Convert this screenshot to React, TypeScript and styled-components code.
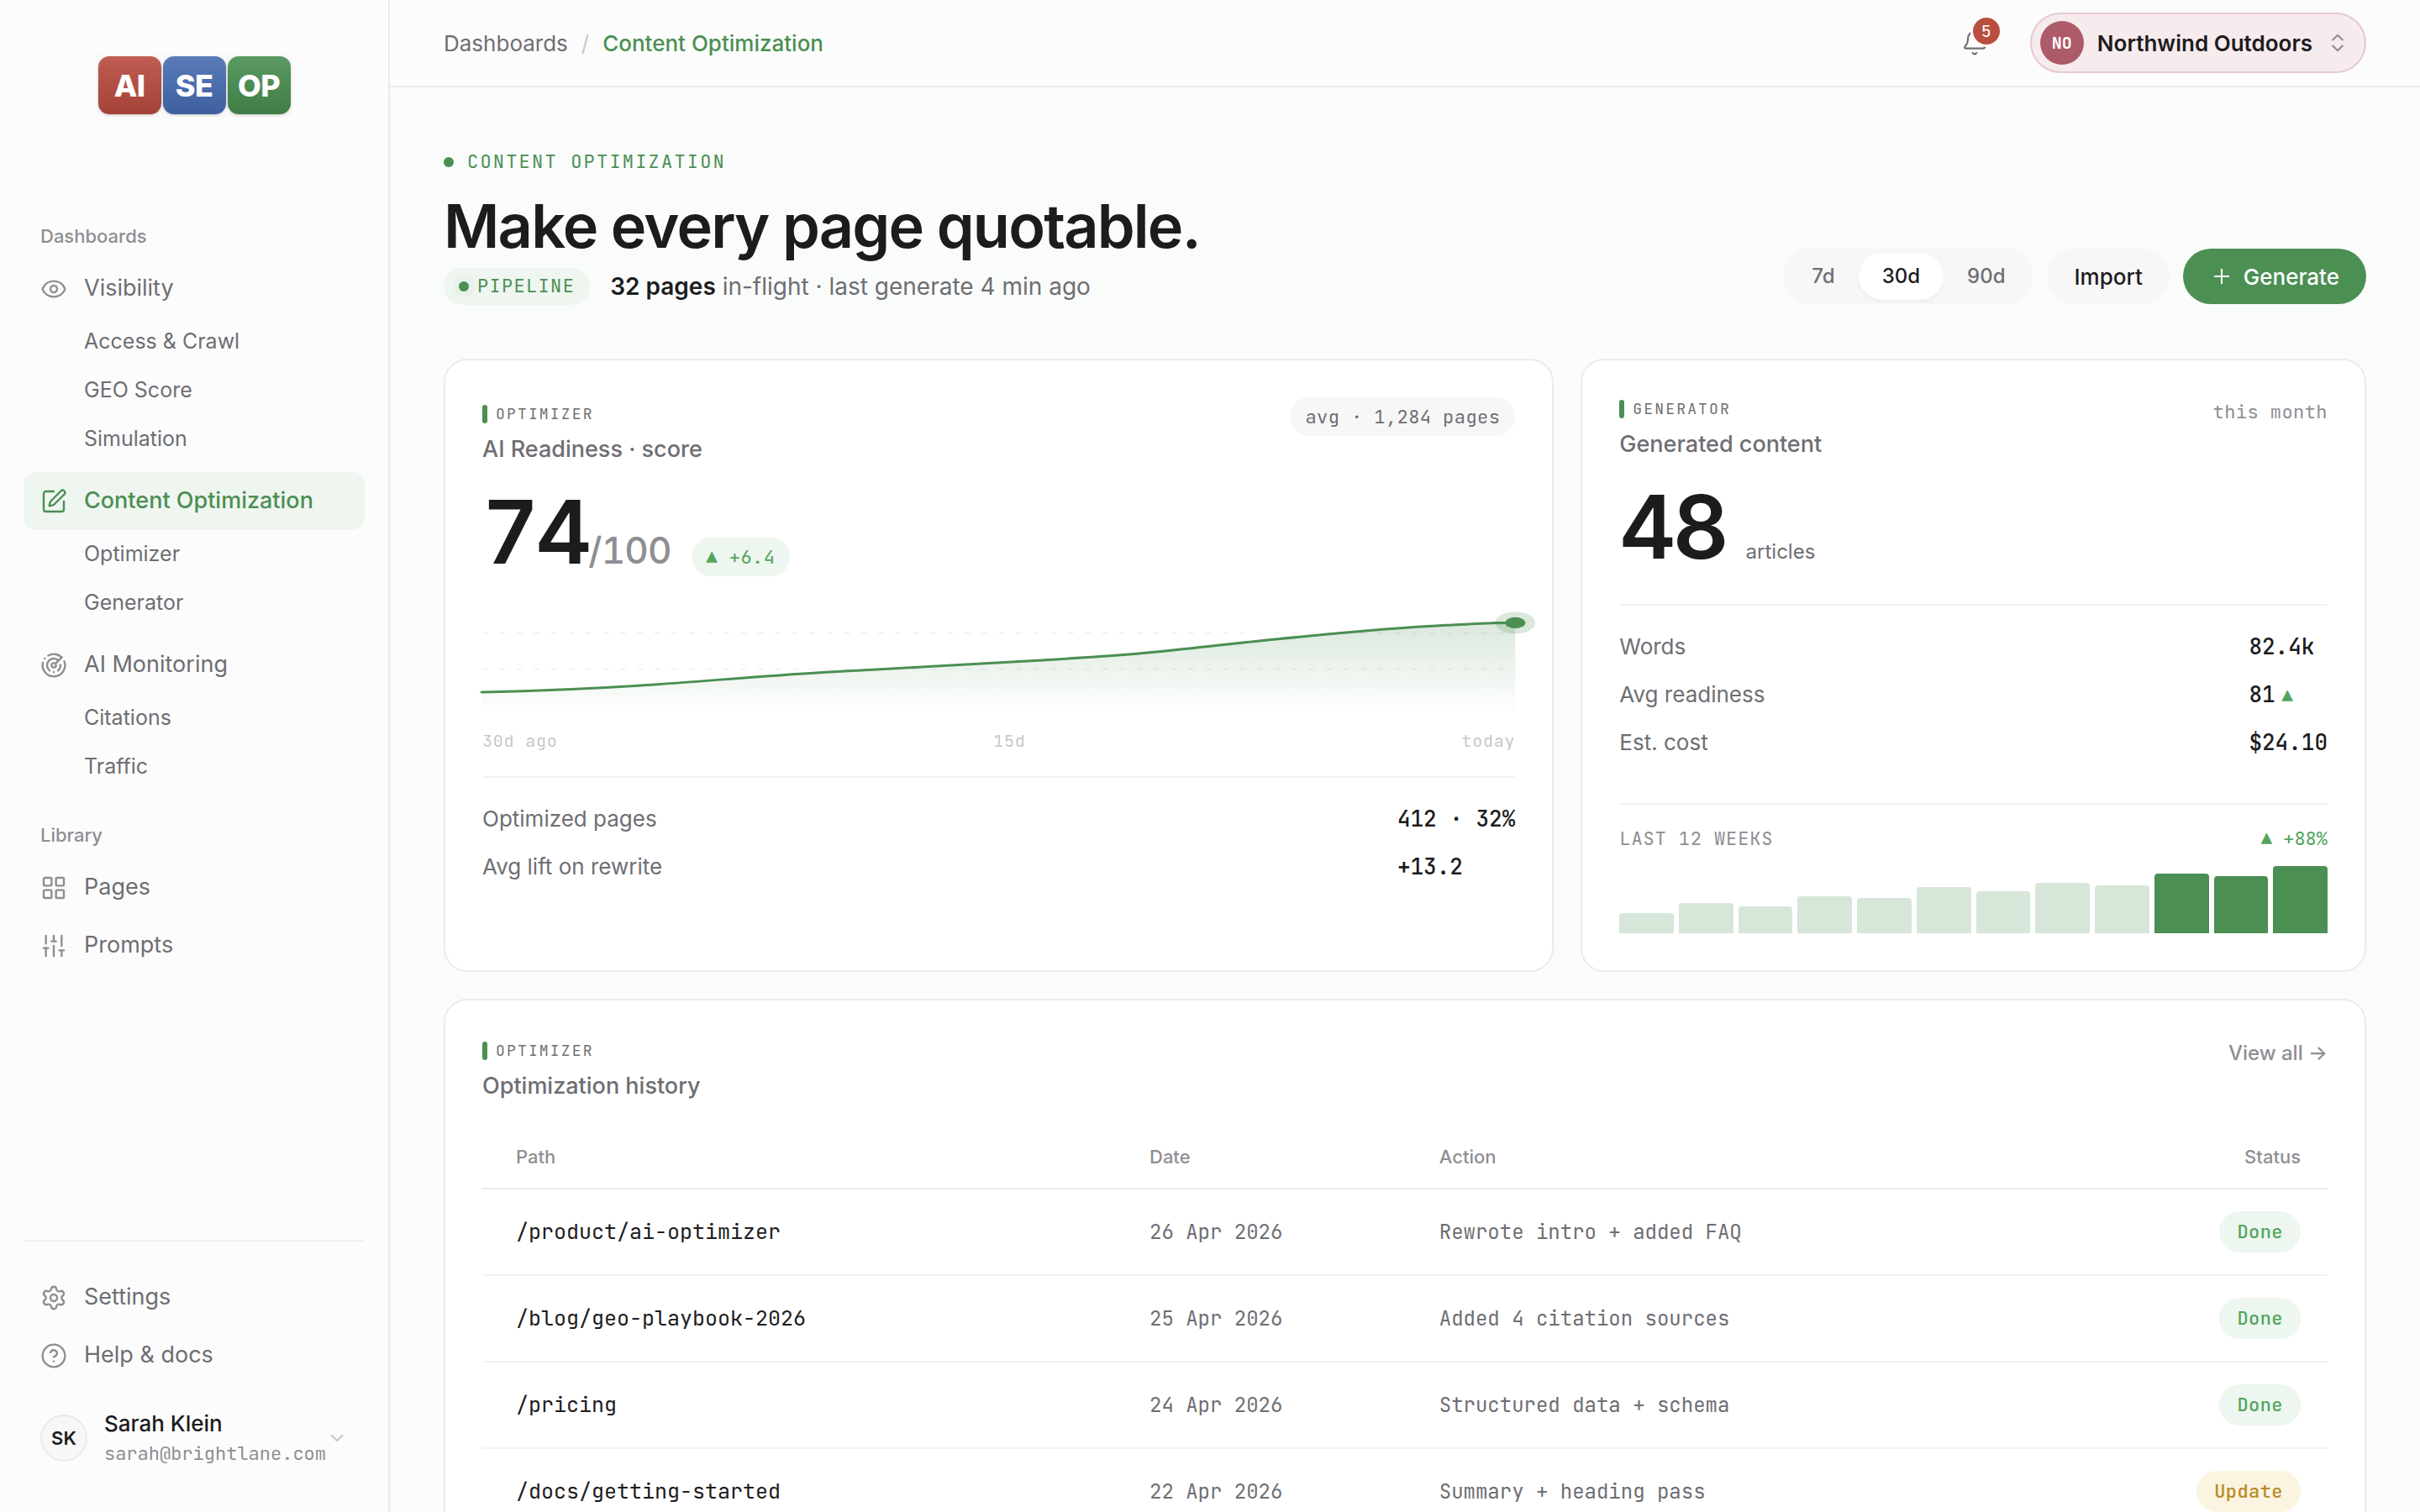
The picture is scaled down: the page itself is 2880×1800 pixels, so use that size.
import { ReactNode } from "react";
import styled, { createGlobalStyle } from "styled-components";
import {
  Bell,
  ChevronDown,
  ChevronsUpDown,
  CircleHelp,
  Eye,
  LayoutGrid,
  LucideIcon,
  Plus,
  Radar,
  Settings,
  SlidersVertical,
  SquarePen,
} from "lucide-react";

const sans = `Inter, "Liberation Sans", sans-serif`;
const mono = `"JetBrains Mono", "DejaVu Sans Mono", "Liberation Mono", monospace`;

const color = {
  ink: "#1c1c1e",
  text: "#6e6e73",
  muted: "#8e8e93",
  faint: "#c7c7cc",
  line: "#ebebeb",
  hairline: "#f2f2f2",
  fill: "#f7f7f7",
  panel: "#fcfcfc",
  page: "#fafcfb",
  green: "#4b8f53",
  greenSoft: "#eff6f0",
  up: "#53a55e",
  upSoft: "#edf6ef",
  amber: "#b98a24",
  amberSoft: "#faf4e1",
};

const GlobalStyle = createGlobalStyle`
  *, *::before, *::after {
    box-sizing: border-box;
  }

  body {
    margin: 0;
    background-color: ${color.page};
    color: ${color.ink};
    font-family: ${sans};
    font-size: 26px;
    line-height: 1.5;
    -webkit-font-smoothing: antialiased;
  }

  a {
    color: inherit;
    text-decoration: none;
  }

  button {
    margin: 0;
    padding: 0;
    border: 0;
    background: none;
    color: inherit;
    font: inherit;
    cursor: pointer;
  }

  h1, h2, p, ul, ol, dl, dd {
    margin: 0;
    padding: 0;
    list-style: none;
  }
`;

const Shell = styled.div`
  display: flex;
  height: 100vh;
`;

/* Sidebar */

const Sidebar = styled.aside`
  flex: none;
  width: 464px;
  padding: 64px 28px 52px;
  display: flex;
  flex-direction: column;
  background-color: ${color.panel};
  border-right: 2px solid ${color.line};
`;

const Logo = styled.a`
  align-self: center;
  display: flex;
  gap: 2px;
  padding: 3px 2px 4px;
  margin-bottom: 125px;
  background-color: #f9f9f9;
`;

const LogoTile = styled.span<{ $from: string; $to: string }>`
  width: 75px;
  height: 69px;
  display: flex;
  align-items: center;
  justify-content: center;
  border-radius: 13px;
  background-image: linear-gradient(${({ $from, $to }) => `${$from}, ${$to}`});
  box-shadow: 0 1px 3px rgba(0, 0, 0, 0.2);
  color: white;
  font-size: 36px;
  font-weight: 800;
  letter-spacing: -0.02em;
`;

const NavLabel = styled.div`
  padding: 0 20px;
  margin-bottom: 11px;
  color: ${color.muted};
  font-size: 22px;
  font-weight: 500;
  line-height: 33px;
`;

const NavGroup = styled.ul`
  & + & {
    margin-top: 10px;
  }
`;

const NavSection = styled.div`
  & + & {
    margin-top: 36px;
  }
`;

const NavItem = styled.a<{ $active?: boolean }>`
  display: flex;
  align-items: center;
  gap: 20px;
  height: 69px;
  padding: 0 20px;
  border-radius: 14px;
  color: ${({ $active }) => ($active ? color.green : color.text)};
  background-color: ${({ $active }) => ($active ? color.greenSoft : "transparent")};
  font-size: 27px;
  font-weight: ${({ $active }) => ($active ? 500 : 400)};

  svg {
    color: ${({ $active }) => ($active ? color.green : color.muted)};
  }
`;

const NavSubItem = styled.a`
  display: flex;
  align-items: center;
  height: 58px;
  padding-left: 72px;
  color: ${color.text};
  font-size: 25px;
`;

const SidebarFooter = styled.div`
  margin-top: auto;
  padding-top: 32px;
  border-top: 2px solid ${color.hairline};
`;

const UserButton = styled.button`
  width: 100%;
  margin-top: 28px;
  padding: 0 20px;
  display: flex;
  align-items: center;
  text-align: left;
`;

const UserAvatar = styled.span`
  flex: none;
  width: 56px;
  height: 56px;
  margin-right: 20px;
  display: flex;
  align-items: center;
  justify-content: center;
  border: 2px solid ${color.line};
  border-radius: 50%;
  background-color: ${color.fill};
  font-size: 22px;
  font-weight: 600;
`;

const UserText = styled.span`
  flex: 1;
  display: flex;
  flex-direction: column;
`;

const UserName = styled.span`
  font-weight: 500;
  line-height: 38px;
`;

const UserEmail = styled.span`
  color: ${color.muted};
  font-family: ${mono};
  font-size: 22px;
  line-height: 34px;
`;

/* Top bar */

const Main = styled.main`
  flex: 1;
  min-width: 0;
  overflow-y: auto;
  scrollbar-width: none;
`;

const TopBar = styled.header`
  display: flex;
  align-items: center;
  justify-content: space-between;
  height: 104px;
  padding: 0 64px;
  background-color: ${color.panel};
  border-bottom: 2px solid ${color.line};
`;

const Breadcrumbs = styled.ol`
  display: flex;
  gap: 16px;
  color: ${color.text};
`;

const Separator = styled.li`
  color: ${color.faint};
`;

const Current = styled.li`
  color: ${color.green};
  font-weight: 500;
`;

const TopActions = styled.div`
  display: flex;
  align-items: center;
  gap: 50px;
`;

const BellButton = styled.button`
  position: relative;
  display: flex;
  color: ${color.text};
`;

const BellBadge = styled.span`
  position: absolute;
  top: -14px;
  right: -14px;
  width: 32px;
  height: 32px;
  display: flex;
  align-items: center;
  justify-content: center;
  border-radius: 50%;
  background-color: #b94e3f;
  box-shadow: 0 0 0 3px ${color.panel};
  color: white;
  font-family: ${mono};
  font-size: 20px;
`;

const OrgButton = styled.button`
  display: flex;
  align-items: center;
  height: 72px;
  padding: 0 18px 0 10px;
  border: 2px solid #e6c9cf;
  border-radius: 36px;
  background-color: #f6ebed;
  font-weight: 600;

  svg {
    margin-left: 16px;
    color: ${color.muted};
  }
`;

const OrgAvatar = styled.span`
  width: 52px;
  height: 52px;
  margin-right: 16px;
  display: flex;
  align-items: center;
  justify-content: center;
  border-radius: 50%;
  background-color: #ad5b69;
  color: white;
  font-family: ${mono};
  font-size: 20px;
`;

/* Hero */

const Content = styled.div`
  padding: 72px 64px;
`;

const Hero = styled.section`
  display: flex;
  align-items: flex-end;
  justify-content: space-between;
  margin-bottom: 64px;
`;

const Dot = styled.span<{ $halo?: boolean }>`
  width: 12px;
  height: 12px;
  border-radius: 50%;
  background-color: ${color.green};
  box-shadow: ${({ $halo }) => ($halo ? "0 0 0 7px #e8f1ea" : "none")};
`;

const HeroEyebrow = styled.p`
  display: flex;
  align-items: center;
  gap: 16px;
  color: ${color.green};
  font-family: ${mono};
  font-size: 22px;
  line-height: 33px;
  letter-spacing: 0.1em;
  text-transform: uppercase;
`;

const HeroTitle = styled.h1`
  margin: 20px 0 10px;
  font-size: 72px;
  font-weight: 600;
  line-height: 80px;
  letter-spacing: -0.025em;
`;

const HeroMeta = styled.div`
  display: flex;
  align-items: center;
  gap: 24px;
  color: ${color.text};
  font-size: 28px;
  line-height: 44px;

  strong {
    color: ${color.ink};
    font-weight: 600;
  }
`;

const PipelineTag = styled.span`
  display: flex;
  align-items: center;
  gap: 10px;
  height: 44px;
  padding: 0 18px;
  border-radius: 22px;
  background-color: ${color.greenSoft};
  color: ${color.green};
  font-family: ${mono};
  font-size: 22px;
  letter-spacing: 0.06em;
  text-transform: uppercase;
`;

const HeroActions = styled.div`
  display: flex;
  align-items: center;
  gap: 16px;
`;

const Segmented = styled.div`
  display: flex;
  padding: 6px;
  border-radius: 34px;
  background-color: ${color.fill};
`;

const Segment = styled.button<{ $active?: boolean }>`
  height: 56px;
  padding: 0 28px;
  border-radius: 28px;
  background-color: ${({ $active }) => ($active ? "white" : "transparent")};
  box-shadow: ${({ $active }) => ($active ? "0 2px 4px rgba(0, 0, 0, 0.05)" : "none")};
  color: ${({ $active }) => ($active ? color.ink : color.text)};
  font-size: 24px;
  font-weight: 500;
`;

const ActionButton = styled.button<{ $primary?: boolean }>`
  display: flex;
  align-items: center;
  gap: 12px;
  height: 66px;
  padding: 0 32px;
  border-radius: 33px;
  background-color: ${({ $primary }) => ($primary ? color.green : color.fill)};
  color: ${({ $primary }) => ($primary ? "white" : color.ink)};
  font-weight: 500;
`;

/* Cards */

const CardGrid = styled.div`
  display: grid;
  grid-template-columns: repeat(12, 1fr);
  gap: 32px;
`;

const Card = styled.section<{ $span: number }>`
  grid-column: span ${({ $span }) => $span};
  min-width: 0;
  padding: 44px;
  border: 2px solid ${color.line};
  border-radius: 28px;
  background-color: white;
`;

const CardHead = styled.div`
  display: flex;
  align-items: baseline;
  justify-content: space-between;
`;

const CardEyebrow = styled.p`
  display: flex;
  align-items: center;
  gap: 10px;
  margin-bottom: 8px;
  color: ${color.text};
  font-family: ${mono};
  font-size: 18px;
  line-height: 28px;
  letter-spacing: 0.12em;
  text-transform: uppercase;

  &::before {
    content: "";
    width: 6px;
    height: 22px;
    border-radius: 3px;
    background-color: ${color.green};
  }
`;

const CardTitle = styled.h2`
  color: ${color.text};
  font-size: 27px;
  font-weight: 500;
  line-height: 40px;
`;

const CardNote = styled.span`
  color: ${color.muted};
  font-family: ${mono};
  font-size: 22px;
  line-height: 33px;
  letter-spacing: 0.02em;
`;

const Chip = styled.span<{ $tone?: "up" | "amber"; $large?: boolean }>`
  display: inline-block;
  padding: ${({ $large }) => ($large ? "8px 21px" : "7px 18px 6px")};
  border-radius: 25px;
  background-color: ${({ $tone }) =>
    $tone === "up" ? color.upSoft : $tone === "amber" ? color.amberSoft : color.fill};
  color: ${({ $tone }) =>
    $tone === "up" ? color.up : $tone === "amber" ? color.amber : color.text};
  font-family: ${mono};
  font-size: 22px;
  font-weight: ${({ $large }) => ($large ? 500 : 400)};
  line-height: 33px;
  letter-spacing: 0.02em;
  white-space: pre;
`;

const ViewAll = styled.a`
  color: ${color.muted};
  font-size: 24px;
  font-weight: 500;
  line-height: 38px;
`;

const Metric = styled.div`
  display: flex;
  align-items: baseline;
  gap: 24px;
  height: 104px;
  margin-top: 26px;
`;

const MetricValue = styled.span`
  font-size: 104px;
  font-weight: 600;
  line-height: 104px;
  letter-spacing: -0.04em;
  font-variant-numeric: tabular-nums;

  small {
    color: ${color.muted};
    font-size: 44px;
    font-weight: 500;
    letter-spacing: -0.02em;
  }
`;

const MetricUnit = styled.span`
  color: ${color.text};
  font-size: 24px;
`;

const Chart = styled.svg`
  display: block;
  width: 100%;
  height: 132px;
  margin-top: 37px;
  overflow: visible;
`;

const ChartAxis = styled.div`
  display: flex;
  justify-content: space-between;
  margin: 13px 0 27px;
  color: ${color.faint};
  font-family: ${mono};
  font-size: 20px;
  line-height: 30px;
  letter-spacing: 0.04em;
`;

const Facts = styled.dl<{ $gapTop?: number }>`
  display: grid;
  grid-template-columns: 1fr auto;
  grid-auto-rows: 57px;
  align-items: center;
  margin-top: ${({ $gapTop }) => $gapTop ?? 0}px;
  padding-top: 20px;
  border-top: 2px solid ${color.hairline};

  dt {
    color: ${color.text};
  }

  dd {
    font-family: ${mono};
    font-weight: 500;
  }
`;

const UpMark = styled.span`
  margin-left: 8px;
  color: ${color.up};
  font-size: 22px;
`;

const Weeks = styled.div`
  margin-top: 44px;
  padding-top: 24px;
  border-top: 2px solid ${color.hairline};
`;

const WeeksHead = styled.div`
  display: flex;
  justify-content: space-between;
  margin-bottom: 16px;
  font-family: ${mono};
  font-size: 22px;
  line-height: 33px;
`;

const WeeksLabel = styled.span`
  color: ${color.muted};
  letter-spacing: 0.04em;
  text-transform: uppercase;
`;

const WeeksDelta = styled.span`
  color: ${color.up};
`;

const Bars = styled.div`
  display: flex;
  align-items: flex-end;
  gap: 6px;
  height: 80px;
`;

const Bar = styled.div<{ $recent: boolean }>`
  flex: 1;
  border-radius: 4px 4px 0 0;
  background-color: ${({ $recent }) => ($recent ? color.green : "#d6e6d9")};
`;

/* History table */

const Table = styled.table`
  width: 100%;
  margin-top: 28px;
  border-collapse: collapse;
  table-layout: fixed;

  th,
  td {
    padding: 0 32px;
    text-align: left;
  }

  th:first-child,
  td:first-child {
    padding-left: 40px;
  }

  th:last-child,
  td:last-child {
    text-align: right;
  }

  th {
    padding-top: 20px;
    padding-bottom: 20px;
    border-bottom: 2px solid ${color.line};
    color: ${color.muted};
    font-size: 22px;
    font-weight: 500;
    line-height: 33px;
  }

  td {
    height: 103px;
    border-bottom: 2px solid ${color.hairline};
    color: ${color.text};
    font-family: ${mono};
    font-size: 24px;
  }

  td:first-child {
    color: ${color.ink};
    font-size: 25px;
  }
`;

interface NavEntry {
  icon: LucideIcon;
  label: string;
  active?: boolean;
  children?: string[];
}

const dashboards: NavEntry[] = [
  { icon: Eye, label: "Visibility", children: ["Access & Crawl", "GEO Score", "Simulation"] },
  {
    icon: SquarePen,
    label: "Content Optimization",
    active: true,
    children: ["Optimizer", "Generator"],
  },
  { icon: Radar, label: "AI Monitoring", children: ["Citations", "Traffic"] },
];

const library: NavEntry[] = [
  { icon: LayoutGrid, label: "Pages" },
  { icon: SlidersVertical, label: "Prompts" },
];

const footerLinks: NavEntry[] = [
  { icon: Settings, label: "Settings" },
  { icon: CircleHelp, label: "Help & docs" },
];

const weeks = [24, 36, 32, 44, 42, 55, 50, 60, 57, 71, 68, 80];

const history = [
  { path: "/product/ai-optimizer", date: "26 Apr 2026", action: "Rewrote intro + added FAQ", status: "Done" },
  { path: "/blog/geo-playbook-2026", date: "25 Apr 2026", action: "Added 4 citation sources", status: "Done" },
  { path: "/pricing", date: "24 Apr 2026", action: "Structured data + schema", status: "Done" },
  { path: "/docs/getting-started", date: "22 Apr 2026", action: "Summary + heading pass", status: "Update" },
];

const NavLink = ({ icon: Icon, label, active }: NavEntry) => (
  <NavItem href="#" $active={active} aria-current={active ? "page" : undefined}>
    <Icon size={32} strokeWidth={1.8} />
    {label}
  </NavItem>
);

const NavTree = ({ entry }: { entry: NavEntry }) => (
  <NavGroup>
    <li>
      <NavLink {...entry} />
    </li>
    {entry.children?.map((child) => (
      <li key={child}>
        <NavSubItem href="#">{child}</NavSubItem>
      </li>
    ))}
  </NavGroup>
);

interface CardHeaderProps {
  eyebrow: string;
  title: string;
  children: ReactNode;
}

const CardHeader = ({ eyebrow, title, children }: CardHeaderProps) => (
  <CardHead>
    <div>
      <CardEyebrow>{eyebrow}</CardEyebrow>
      <CardTitle>{title}</CardTitle>
    </div>
    {children}
  </CardHead>
);

const curve =
  "M0 54.1 C22 53.2 42 51.5 60 49.3 S98 43.8 118.6 41.6 S168 36.8 195 33.9 S228 30 242 27.3 S272 21.4 284 19.3 S318 13.4 336 11.8 S352 10.3 360 10.3";

const ReadinessChart = () => (
  <Chart viewBox="0 0 360 70" preserveAspectRatio="none" aria-hidden>
    <defs>
      <linearGradient id="readiness" x1="0" y1="0" x2="0" y2="1">
        <stop offset="0" stopColor={color.green} stopOpacity="0.2" />
        <stop offset="1" stopColor={color.green} stopOpacity="0" />
      </linearGradient>
    </defs>
    <path d="M0 16.8H360M0 39.6H360" stroke="#f0f0f0" strokeDasharray="2 4" />
    <path d={`${curve} V68 H0 Z`} fill="url(#readiness)" />
    <path d={curve} fill="none" stroke={color.green} strokeWidth="1.6" strokeLinecap="round" />
    <circle cx="360" cy="10.3" r="7" fill={color.green} fillOpacity="0.2" />
    <circle cx="360" cy="10.3" r="3.5" fill={color.green} />
  </Chart>
);

const App = () => {
  return (
    <Shell>
      <GlobalStyle />
      <Sidebar>
        <Logo href="#" aria-label="AISEOP home">
          <LogoTile $from="#c05d52" $to="#a54237">AI</LogoTile>
          <LogoTile $from="#587cb8" $to="#3e5f9f">SE</LogoTile>
          <LogoTile $from="#5a9a63" $to="#407c46">OP</LogoTile>
        </Logo>
        <nav>
          <NavSection>
            <NavLabel>Dashboards</NavLabel>
            {dashboards.map((entry) => (
              <NavTree key={entry.label} entry={entry} />
            ))}
          </NavSection>
          <NavSection>
            <NavLabel>Library</NavLabel>
            {library.map((entry) => (
              <NavLink key={entry.label} {...entry} />
            ))}
          </NavSection>
        </nav>
        <SidebarFooter>
          {footerLinks.map((entry) => (
            <NavLink key={entry.label} {...entry} />
          ))}
          <UserButton>
            <UserAvatar>SK</UserAvatar>
            <UserText>
              <UserName>Sarah Klein</UserName>
              <UserEmail>sarah@brightlane.com</UserEmail>
            </UserText>
            <ChevronDown size={28} strokeWidth={1.8} color={color.faint} />
          </UserButton>
        </SidebarFooter>
      </Sidebar>

      <Main>
        <TopBar>
          <Breadcrumbs>
            <li>
              <a href="#">Dashboards</a>
            </li>
            <Separator>/</Separator>
            <Current>Content Optimization</Current>
          </Breadcrumbs>
          <TopActions>
            <BellButton aria-label="Notifications">
              <Bell size={32} strokeWidth={1.6} />
              <BellBadge>5</BellBadge>
            </BellButton>
            <OrgButton>
              <OrgAvatar>NO</OrgAvatar>
              Northwind Outdoors
              <ChevronsUpDown size={28} strokeWidth={1.8} />
            </OrgButton>
          </TopActions>
        </TopBar>

        <Content>
          <Hero>
            <div>
              <HeroEyebrow>
                <Dot />
                Content Optimization
              </HeroEyebrow>
              <HeroTitle>Make every page quotable.</HeroTitle>
              <HeroMeta>
                <PipelineTag>
                  <Dot $halo />
                  Pipeline
                </PipelineTag>
                <p>
                  <strong>32 pages</strong> in-flight · last generate 4 min ago
                </p>
              </HeroMeta>
            </div>
            <HeroActions>
              <Segmented>
                <Segment>7d</Segment>
                <Segment $active>30d</Segment>
                <Segment>90d</Segment>
              </Segmented>
              <ActionButton>Import</ActionButton>
              <ActionButton $primary>
                <Plus size={28} strokeWidth={1.8} />
                Generate
              </ActionButton>
            </HeroActions>
          </Hero>

          <CardGrid>
            <Card $span={7}>
              <CardHeader eyebrow="Optimizer" title="AI Readiness · score">
                <Chip>avg · 1,284 pages</Chip>
              </CardHeader>
              <Metric>
                <MetricValue>
                  74<small>/100</small>
                </MetricValue>
                <Chip $tone="up">▲ +6.4</Chip>
              </Metric>
              <ReadinessChart />
              <ChartAxis>
                <span>30d ago</span>
                <span>15d</span>
                <span>today</span>
              </ChartAxis>
              <Facts>
                <dt>Optimized pages</dt>
                <dd>412 · 32%</dd>
                <dt>Avg lift on rewrite</dt>
                <dd>+13.2</dd>
              </Facts>
            </Card>

            <Card $span={5}>
              <CardHeader eyebrow="Generator" title="Generated content">
                <CardNote>this month</CardNote>
              </CardHeader>
              <Metric>
                <MetricValue>48</MetricValue>
                <MetricUnit>articles</MetricUnit>
              </Metric>
              <Facts $gapTop={40}>
                <dt>Words</dt>
                <dd>82.4k</dd>
                <dt>Avg readiness</dt>
                <dd>
                  81<UpMark>▲</UpMark>
                </dd>
                <dt>Est. cost</dt>
                <dd>$24.10</dd>
              </Facts>
              <Weeks>
                <WeeksHead>
                  <WeeksLabel>Last 12 weeks</WeeksLabel>
                  <WeeksDelta>▲ +88%</WeeksDelta>
                </WeeksHead>
                <Bars>
                  {weeks.map((value, i) => (
                    <Bar key={i} $recent={i >= weeks.length - 3} style={{ height: value }} />
                  ))}
                </Bars>
              </Weeks>
            </Card>

            <Card $span={12}>
              <CardHeader eyebrow="Optimizer" title="Optimization history">
                <ViewAll href="#">View all →</ViewAll>
              </CardHeader>
              <Table>
                <colgroup>
                  <col style={{ width: "34.7%" }} />
                  <col style={{ width: "15.7%" }} />
                  <col />
                  <col style={{ width: "20%" }} />
                </colgroup>
                <thead>
                  <tr>
                    <th scope="col">Path</th>
                    <th scope="col">Date</th>
                    <th scope="col">Action</th>
                    <th scope="col">Status</th>
                  </tr>
                </thead>
                <tbody>
                  {history.map(({ path, date, action, status }) => (
                    <tr key={path}>
                      <td>{path}</td>
                      <td>{date}</td>
                      <td>{action}</td>
                      <td>
                        <Chip $large $tone={status === "Done" ? "up" : "amber"}>
                          {status}
                        </Chip>
                      </td>
                    </tr>
                  ))}
                </tbody>
              </Table>
            </Card>
          </CardGrid>
        </Content>
      </Main>
    </Shell>
  );
};

export default App;
